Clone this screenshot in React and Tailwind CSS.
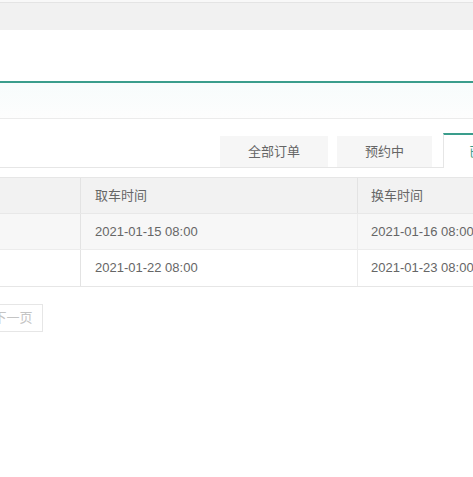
export default function App() {
  const rows = [
    { a: "2021-01-15 08:00", b: "2021-01-16 08:00", bg: "bg-[#f7f7f7]" },
    { a: "2021-01-22 08:00", b: "2021-01-23 08:00", bg: "bg-white" },
  ];
  return (
    <div
      className="w-[473px] h-[477px] overflow-hidden bg-white text-[13px] text-[#666]"
      style={{ fontFamily: '"Liberation Sans", "Noto Sans CJK SC", sans-serif' }}
    >
      <div className="h-[2px] bg-[#f8f8f8]" />
      <div className="h-[28px] bg-[#f1f1f1] border-t border-[#e4e4e4]" />
      <div className="h-[51px] bg-white" />
      <div className="h-[2px] bg-[#3a9d8c]" />
      <div className="h-[36px] bg-gradient-to-b from-[#f7fcfc] to-[#fdfdfd] border-b border-[#ebebeb]" />
      <div className="h-[14px]" />
      <div className="flex items-end h-[35px] w-[600px]">
        <div className="w-[220px] shrink-0 h-full border-b border-[#e6e6e6]" />
        <div className="w-[108px] shrink-0 h-[32px] bg-[#f6f6f6] flex items-center justify-center border-b border-[#e6e6e6]">
          全部订单
        </div>
        <div className="w-[9px] shrink-0 h-full border-b border-[#e6e6e6]" />
        <div className="w-[95px] shrink-0 h-[32px] bg-[#f6f6f6] flex items-center justify-center border-b border-[#e6e6e6]">
          预约中
        </div>
        <div className="w-[11px] shrink-0 h-full border-b border-[#e6e6e6]" />
        <div className="w-[100px] shrink-0 h-full bg-white border-t-2 border-t-[#3a9d8c] border-l border-l-[#e6e6e6] flex items-center pl-[25px] text-[#3a9d8c]">
          已完成
        </div>
      </div>
      <div className="h-[9px]" />
      <div className="w-[600px] border-t border-b border-[#e6e6e6]">
        <div className="flex h-[36px] bg-[#f2f2f2] border-b border-[#e8e8e8]">
          <div className="w-[81px] shrink-0 border-r border-[#e3e3e3]" />
          <div className="w-[277px] shrink-0 border-r border-[#e3e3e3] flex items-center pl-[14px]">取车时间</div>
          <div className="flex-1 flex items-center pl-[13px]">换车时间</div>
        </div>
        {rows.map((r, i) => (
          <div key={i} className={`flex h-[36px] ${r.bg} ${i === 0 ? "border-b border-[#ececec]" : ""}`}>
            <div className="w-[81px] shrink-0 border-r border-[#e3e3e3]" />
            <div className="w-[277px] shrink-0 border-r border-[#ececec] flex items-center pl-[14px]">{r.a}</div>
            <div className="flex-1 flex items-center pl-[13px]">{r.b}</div>
          </div>
        ))}
      </div>
      <div className="h-[17px]" />
      <div className="ml-[-17px] w-[60px] h-[28px] border border-[#e6e6e6] flex items-center justify-center text-[#c4c4c4]">
        下一页
      </div>
    </div>
  );
}
